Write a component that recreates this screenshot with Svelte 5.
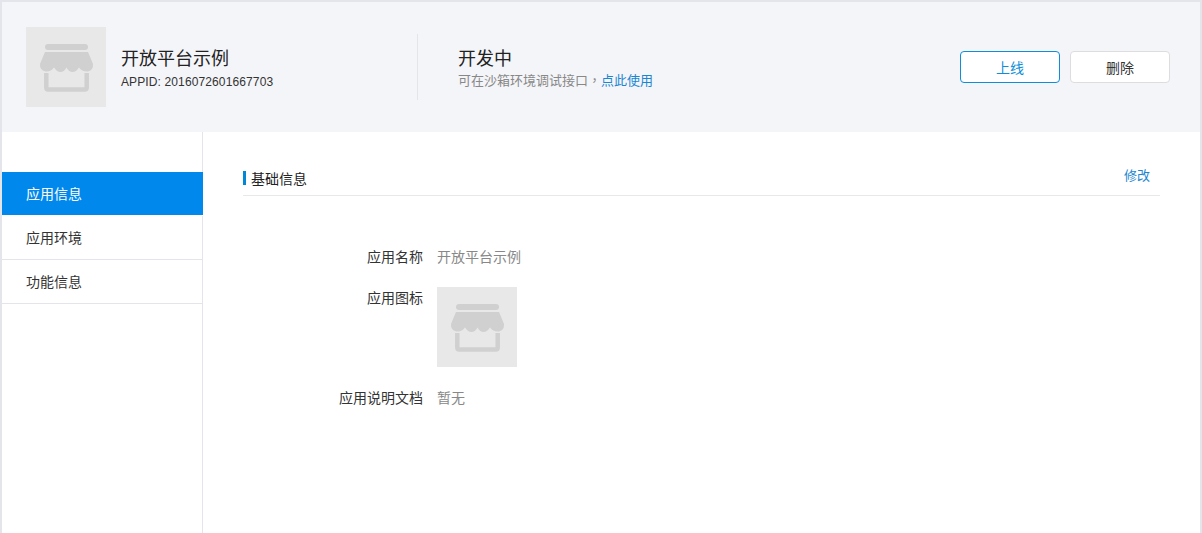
<script>
    const menu = [
        { label: "应用信息", active: true },
        { label: "应用环境", active: false },
        { label: "功能信息", active: false },
    ];
</script>

{#snippet shopIcon()}
    <div class="tile">
        <svg width="80" height="80" viewBox="0 0 80 80">
            <rect x="19" y="17" width="43" height="6" rx="3" fill="#d0d0d0" />
            <path
                d="M19 25H62L67 37Q67.500 43 62 44.500Q56 45 53 40.500Q50 45 46.500 45Q43 45 40.500 40.500Q38 45 34.500 45Q31 45 28 40.500Q25 45 19.500 44.500Q13.500 43 14 37Z"
                fill="#d0d0d0"
            />
            <path d="M20.300 46V60.500Q20.300 62.500 22.300 62.500H58.700Q60.700 62.500 60.700 60.500V46" fill="none" stroke="#d0d0d0" stroke-width="4.500" />
        </svg>
    </div>
{/snippet}

<div class="page">
    <header>
        <div class="app">
            {@render shopIcon()}
            <div class="app-text">
                <h1>开放平台示例</h1>
                <p>APPID: 2016072601667703</p>
            </div>
        </div>
        <div class="status">
            <h2>开发中</h2>
            <p>可在沙箱环境调试接口<span class="comma">，</span><a href="#use">点此使用</a></p>
        </div>
        <div class="actions">
            <button class="primary">上线</button>
            <button>删除</button>
        </div>
    </header>

    <div class="body">
        <nav>
            {#each menu as item}
                <div class="item" class:active={item.active}>{item.label}</div>
            {/each}
        </nav>
        <main>
            <div class="section-head">
                <span class="section-title">基础信息</span>
                <a href="#edit">修改</a>
            </div>
            <dl>
                <div class="row">
                    <dt>应用名称</dt>
                    <dd>开放平台示例</dd>
                </div>
                <div class="row">
                    <dt>应用图标</dt>
                    <dd>{@render shopIcon()}</dd>
                </div>
                <div class="row">
                    <dt>应用说明文档</dt>
                    <dd>暂无</dd>
                </div>
            </dl>
        </main>
    </div>
</div>

<style>
    :global(body) {
        margin: 0;
        background: #fff;
    }

    .page {
        height: 533px;
        box-sizing: border-box;
        border: 2px solid #e3e5ea;
        border-bottom: 0;
        font-family: "Noto Sans CJK SC", "Liberation Sans", sans-serif;
        font-size: 14px;
        color: #333;
        display: flex;
        flex-direction: column;
        overflow: hidden;
    }

    header {
        height: 130px;
        flex: none;
        background: #f4f5f9;
        display: flex;
        align-items: center;
        padding: 0 30px 0 24px;
    }

    .app {
        width: 391px;
        display: flex;
        align-items: center;
        gap: 15px;
    }

    .tile {
        width: 80px;
        height: 80px;
        background: #e8e8e8;
    }

    .tile svg {
        display: block;
    }

    h1 {
        margin: 0;
        font-size: 18px;
        font-weight: 400;
        line-height: 26px;
        color: #222;
    }

    .app-text p {
        margin: 3px 0 0;
        font-family: "Liberation Sans", sans-serif;
        font-size: 12px;
        line-height: 18px;
        letter-spacing: 0.12px;
    }

    .status {
        height: 66px;
        flex: 1;
        box-sizing: border-box;
        border-left: 1px solid #e3e5ea;
        padding: 10px 0 0 40px;
    }

    h2 {
        margin: 0;
        font-size: 18px;
        font-weight: 400;
        line-height: 26px;
        color: #222;
    }

    .status p {
        margin: 0;
        font-size: 13px;
        line-height: 20px;
        color: #888;
    }

    .comma {
        font-family: "Noto Sans CJK TC", sans-serif;
    }

    a {
        color: #1c86d1;
        text-decoration: none;
    }

    .actions {
        display: flex;
        gap: 10px;
    }

    button {
        width: 100px;
        height: 32px;
        padding: 0;
        background: #fff;
        border: 1px solid #ddd;
        border-radius: 4px;
        font-family: inherit;
        font-size: 14px;
        color: #333;
    }

    button.primary {
        border-color: #0e8ed8;
        color: #0e8ed8;
    }

    .body {
        flex: 1;
        display: flex;
    }

    nav {
        width: 200px;
        flex: none;
        border-right: 1px solid #e3e5ea;
        padding-top: 40px;
    }

    .item {
        height: 43px;
        padding-left: 24px;
        line-height: 42px;
        border-bottom: 1px solid #e3e5ea;
    }

    .item.active {
        margin-right: -1px;
        position: relative;
        background: #0088ed;
        border-bottom-color: #fff;
        color: #fff;
    }

    main {
        flex: 1;
        padding: 32px 40px 0 40px;
    }

    .section-head {
        height: 31px;
        display: flex;
        justify-content: space-between;
        border-bottom: 1px solid #e8e8e8;
        padding-right: 10px;
    }

    .section-title {
        height: 14px;
        margin-top: 7px;
        border-left: 3px solid #0088d6;
        padding-left: 5px;
        line-height: 15px;
        color: #222;
    }

    .section-head a {
        font-size: 13px;
        line-height: 20px;
        margin-top: 1px;
    }

    dl {
        margin: 50px 0 0;
    }

    .row {
        display: flex;
        margin-bottom: 20px;
    }

    dt {
        width: 180px;
        flex: none;
        text-align: right;
        line-height: 21px;
    }

    dd {
        margin: 0 0 0 14px;
        line-height: 21px;
        color: #888;
    }
</style>
